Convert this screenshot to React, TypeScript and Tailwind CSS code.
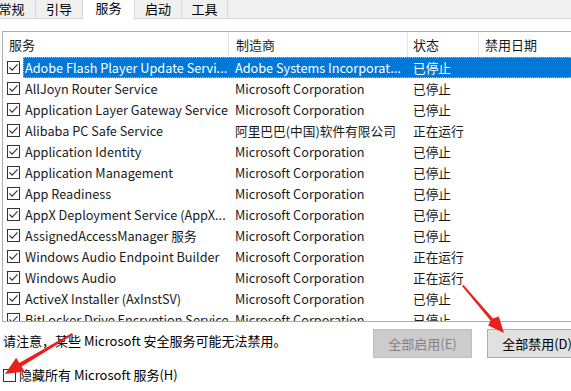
import React from 'react';

const FONT = '"Noto Sans CJK SC", "Noto Sans", sans-serif';

type Svc = { name: string; maker: string; status: string };

const services: Svc[] = [
  { name: 'Adobe Flash Player Update Servi...', maker: 'Adobe Systems Incorporat...', status: '已停止' },
  { name: 'AllJoyn Router Service', maker: 'Microsoft Corporation', status: '已停止' },
  { name: 'Application Layer Gateway Service', maker: 'Microsoft Corporation', status: '已停止' },
  { name: 'Alibaba PC Safe Service', maker: '阿里巴巴(中国)软件有限公司', status: '正在运行' },
  { name: 'Application Identity', maker: 'Microsoft Corporation', status: '已停止' },
  { name: 'Application Management', maker: 'Microsoft Corporation', status: '已停止' },
  { name: 'App Readiness', maker: 'Microsoft Corporation', status: '已停止' },
  { name: 'AppX Deployment Service (AppX...', maker: 'Microsoft Corporation', status: '已停止' },
  { name: 'AssignedAccessManager 服务', maker: 'Microsoft Corporation', status: '已停止' },
  { name: 'Windows Audio Endpoint Builder', maker: 'Microsoft Corporation', status: '正在运行' },
  { name: 'Windows Audio', maker: 'Microsoft Corporation', status: '正在运行' },
  { name: 'ActiveX Installer (AxInstSV)', maker: 'Microsoft Corporation', status: '已停止' },
  { name: 'BitLocker Drive Encryption Service', maker: 'Microsoft Corporation', status: '已停止' },
];

const CheckBox = ({ checked }: { checked: boolean }) => (
  <svg width="13" height="13" viewBox="0 0 13 13" className="shrink-0">
    <rect x="0.5" y="0.5" width="12" height="12" fill="#fff" stroke="#333" />
    {checked && <path d="M2.5 6.5 L5.2 9.2 L10.5 3.3" fill="none" stroke="#333" strokeWidth="1.1" />}
  </svg>
);

const tabs = [
  { label: '常规', w: 'w-[48px] -ml-[12px]', active: false },
  { label: '引导', w: 'w-[47px]', active: false },
  { label: '服务', w: 'w-[52px]', active: true },
  { label: '启动', w: 'w-[47px]', active: false },
  { label: '工具', w: 'w-[46px]', active: false },
];

const Row = ({ s, selected }: { s: Svc; selected: boolean }) => (
  <div className="flex h-[21px] items-center">
    <div className="w-[20px] flex justify-end pr-[3px] pl-[4px]">
      <CheckBox checked />
    </div>
    <div
      className={
        'flex h-full items-center text-[12.7px] ' +
        (selected ? 'bg-[#0078d7] text-white border border-dotted border-[#8cc4f0]' : 'text-[#1a1a1a] border border-transparent')
      }
    >
      <div className="w-[204px] pl-[1px] whitespace-nowrap">{s.name}</div>
      <div className="w-[179px] pl-[7px] whitespace-nowrap">{s.maker}</div>
      <div className="w-[71px] pl-[6px] whitespace-nowrap">{s.status}</div>
      <div className="w-[100px]" />
    </div>
  </div>
);

export default function App() {
  return (
    <div
      className="relative w-[571px] h-[391px] overflow-hidden bg-white text-[13px] leading-[16px] text-black"
      style={{ fontFamily: FONT }}
    >
      {/* tab strip */}
      <div className="flex h-[19px] bg-[#f0f0f0] border-b border-[#d9d9d9]">
        {tabs.map((t) => (
          <div
            key={t.label}
            className={
              t.w +
              ' shrink-0 flex justify-center border-r border-[#d9d9d9] ' +
              (t.active ? 'bg-white h-[20px] items-start pt-[0px]' : 'items-center')
            }
          >
            {t.label}
          </div>
        ))}
      </div>

      {/* service list */}
      <div className="ml-[2px] mt-[12px] w-[600px] h-[291px] overflow-hidden border-t border-l border-b border-[#adadad]">
        <div className="flex h-[25px] items-center text-[#1a1a1a]">
          <div className="w-[225px] pl-[6px] h-full flex items-center">服务</div>
          <div className="w-[179px] pl-[7px] h-full flex items-center border-l border-[#e5e5e5]">制造商</div>
          <div className="w-[71px] pl-[5px] h-full flex items-center border-l border-[#e5e5e5]">状态</div>
          <div className="w-[120px] pl-[6px] h-full flex items-center border-l border-[#e5e5e5]">禁用日期</div>
        </div>
        {services.map((s, i) => (
          <Row key={s.name} s={s} selected={i === 0} />
        ))}
      </div>

      {/* notice + buttons */}
      <div className="flex items-start w-[620px] h-[46px]">
        <div className="w-[373px] pl-[3px] pt-[11px] whitespace-nowrap">请注意，某些 Microsoft 安全服务可能无法禁用。</div>
        <div className="mt-[7px] w-[99px] h-[29px] flex items-center justify-center bg-[#cccccc] border border-[#bfbfbf] text-[#838383]">
          全部启用(E)
        </div>
        <div className="ml-[15px] mt-[7px] w-[99px] h-[29px] flex items-center justify-center bg-[#e1e1e1] border border-[#adadad] pl-[1px]">
          全部禁用(D)
        </div>
      </div>

      <div className="flex items-center pl-[3px] gap-[3px] -mt-[1px]">
        <CheckBox checked={false} />
        <span>隐藏所有 Microsoft 服务(H)</span>
      </div>

      {/* red annotation arrows */}
      <svg className="absolute inset-0 pointer-events-none" width="571" height="391">
        <polygon
          points="462,286 463.6,285 493,318.5 498.8,316.4 504,333 488.2,325.6 490.5,320.5"
          fill="#e8211d"
        />
        <polygon
          points="72,333 73,334.8 21.6,366.6 24.6,371.4 5,374 16.2,357.8 19.2,363"
          fill="#e8211d"
        />
      </svg>
    </div>
  );
}
